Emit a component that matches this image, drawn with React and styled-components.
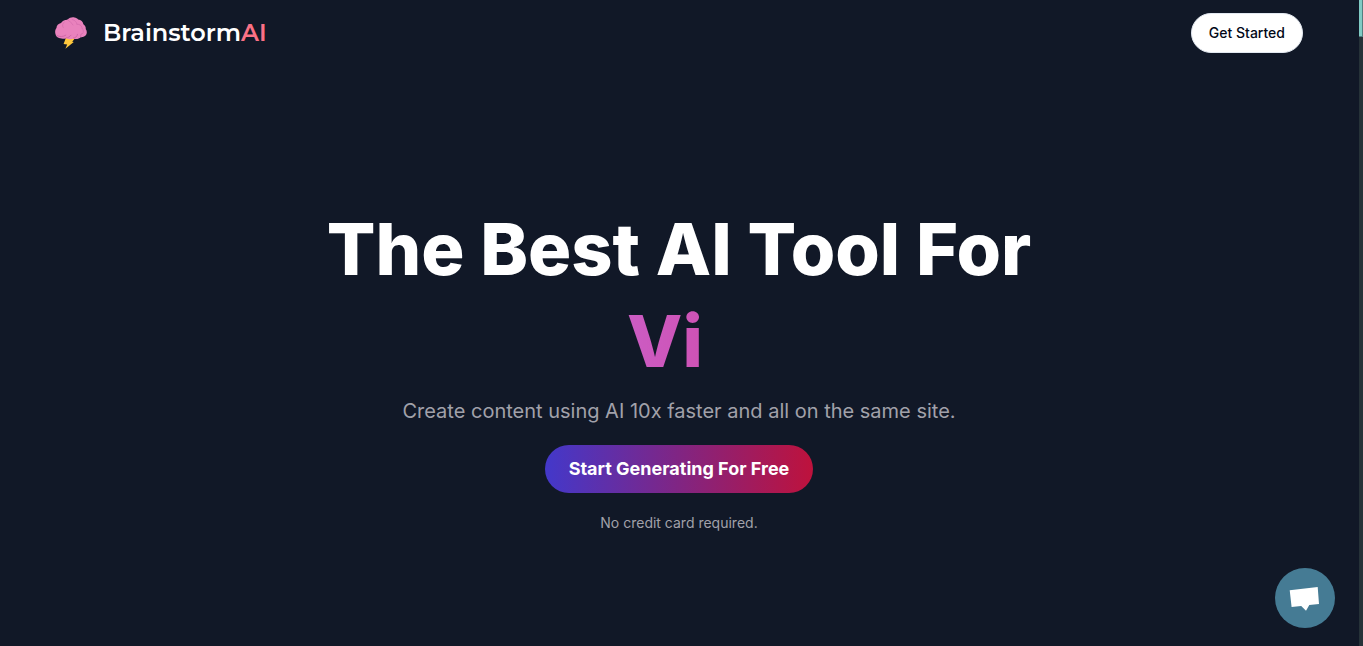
import React from "react";
import styled, { createGlobalStyle } from "styled-components";

const GlobalStyle = createGlobalStyle`
  *, *::before, *::after { box-sizing: border-box; }
  body {
    margin: 0;
    background: #111827;
    color: #ffffff;
    font-family: Inter, "Liberation Sans", sans-serif;
  }
  button { font-family: inherit; cursor: pointer; }
`;

const Page = styled.div`
  min-height: 100vh;
  padding-right: 5px;
`;

const Container = styled.div`
  max-width: 1280px;
  margin: 0 auto;
`;

const Header = styled.header`
  display: flex;
  align-items: center;
  justify-content: space-between;
  padding: 13px 16px;
`;

const Brand = styled.a`
  display: flex;
  align-items: center;
  gap: 16px;
  color: inherit;
  text-decoration: none;
`;

const BrandMark = styled.svg`
  width: 32px;
  height: 32px;
`;

const BrandName = styled.span`
  font-family: Montserrat, Inter, sans-serif;
  font-size: 24px;
  line-height: 32px;
  font-weight: 600;
`;

const Accent = styled.span`
  color: #fb7185;
`;

const PillButton = styled.button`
  height: ${(p) => (p.$hero ? 48 : 40)}px;
  padding: 0 ${(p) => (p.$hero ? 24 : 17)}px 2px;
  border: ${(p) => (p.$hero ? "0" : "1px solid #e2e8f0")};
  border-radius: 24px;
  background: ${(p) =>
    p.$hero ? "linear-gradient(to right, #4338ca, #be123c)" : "#ffffff"};
  color: ${(p) => (p.$hero ? "#ffffff" : "#020817")};
  font-size: ${(p) => (p.$hero ? 18 : 14)}px;
  font-weight: ${(p) => (p.$hero ? 700 : 500)};
  white-space: nowrap;
`;

const Hero = styled.main`
  display: flex;
  flex-direction: column;
  align-items: center;
  gap: 20px;
  padding: 147px 16px 113px;
  text-align: center;
`;

const Title = styled.h1`
  display: flex;
  flex-direction: column;
  gap: 20px;
  margin: 0;
  font-size: 72px;
  line-height: 72px;
  font-weight: 800;
`;

const Typed = styled.span`
  background: linear-gradient(to right, #c084fc, #db2777);
  background-clip: text;
  -webkit-background-clip: text;
  color: transparent;
`;

const Caret = styled.span`
  display: inline-block;
  width: 28px;
`;

const Lead = styled.p`
  margin: 0;
  color: #a1a1aa;
  font-size: 20px;
  line-height: 28px;
  font-weight: 400;
`;

const Note = styled.p`
  margin: 0;
  color: #a1a1aa;
  font-size: 14px;
  line-height: 20px;
`;

const ChatButton = styled.button`
  position: fixed;
  right: 28px;
  bottom: 18px;
  width: 60px;
  height: 60px;
  padding: 0;
  border: 0;
  border-radius: 50%;
  background: #457b94;
  svg { display: block; width: 60px; height: 60px; }
`;

const ScrollTrack = styled.div`
  position: fixed;
  top: 0;
  right: 0;
  bottom: 0;
  width: 4px;
  background: #263238;
`;

const ScrollThumb = styled.div`
  height: 37px;
  background: #80cbc4;
  border: solid #527f80;
  border-width: 0 1px 1px 0;
`;

function BrainLogo() {
  return (
    <BrandMark viewBox="0 0 32 32" aria-hidden="true">
      <path fill="#ffc83d" d="M11 20.5 20.6 20.5 17.2 24.7 18.8 25 10.4 31.7 12.2 27.4 8.6 27Z" />
      <path
        fill="#e982bd"
        d="M.6 17.5C-.3 15 .2 12.6 1.5 11 1.4 8.5 3.2 6.4 6 5.9 7.8 3.7 10 2.7 12.6 2.8 14.5.6 17 0 19.5.5 21 .8 22.4 1.5 23.2 2.6 26 3 28 4.7 28.4 7.2 30.4 8.5 31 10.5 30.7 12 32.4 14.3 32 17 30.5 18.6 29 20.1 27.2 20.4 25.7 20.2 24 22 20.8 22.6 18.5 21.4 16 22.7 13 22.5 11.3 21.2 8.8 22.1 5 21.9 3 20.6 1.6 19.8 1 18.7.6 17.5Z"
      />
      <g fill="none" stroke="#d66fae" strokeWidth="0.8" strokeLinecap="round">
        <path d="M9.3 5.2C7.3 6.4 7 8.7 8.2 10.5M12.6 2.8C14.5 4.8 17 5.5 18 8M17.2 2.5C20 3.2 21.7 5 22 7.2M22 7.2C25 7 27 9 27.3 11.5M27.3 11.5C28.8 13 28.7 15.2 27.6 16.7" />
        <path stroke="#c962a2" d="M2 18.6C4.5 20.2 8.2 19.8 10.8 18.2M11.3 20.8C13.4 20.8 14.8 19.6 16 18.2M18.5 21C20.5 21 22.2 19.5 22.5 17.3M25.7 19.8C25.4 18.8 25.8 17.5 26.6 16.7" />
      </g>
    </BrandMark>
  );
}

export default function App() {
  return (
    <Page>
      <GlobalStyle />
      <Container>
        <Header>
          <Brand href="#">
            <BrainLogo />
            <BrandName>
              Brainstorm<Accent>AI</Accent>
            </BrandName>
          </Brand>
          <PillButton type="button">Get Started</PillButton>
        </Header>
        <Hero>
          <Title>
            <span>The Best AI Tool For</span>
            <Typed>
              Vi
              <Caret />
            </Typed>
          </Title>
          <Lead>Create content using AI 10x faster and all on the same site.</Lead>
          <PillButton type="button" $hero>
            Start Generating For Free
          </PillButton>
          <Note>No credit card required.</Note>
        </Hero>
      </Container>
      <ChatButton type="button" aria-label="Open chat">
        <svg viewBox="0 0 60 60" aria-hidden="true">
          <path fill="#ffffff" d="M14.7 22.2 42.7 19 44 36 34.3 37.1 31 42.8 26.2 37.9 16.6 39Z" />
        </svg>
      </ChatButton>
      <ScrollTrack aria-hidden="true">
        <ScrollThumb />
      </ScrollTrack>
    </Page>
  );
}
